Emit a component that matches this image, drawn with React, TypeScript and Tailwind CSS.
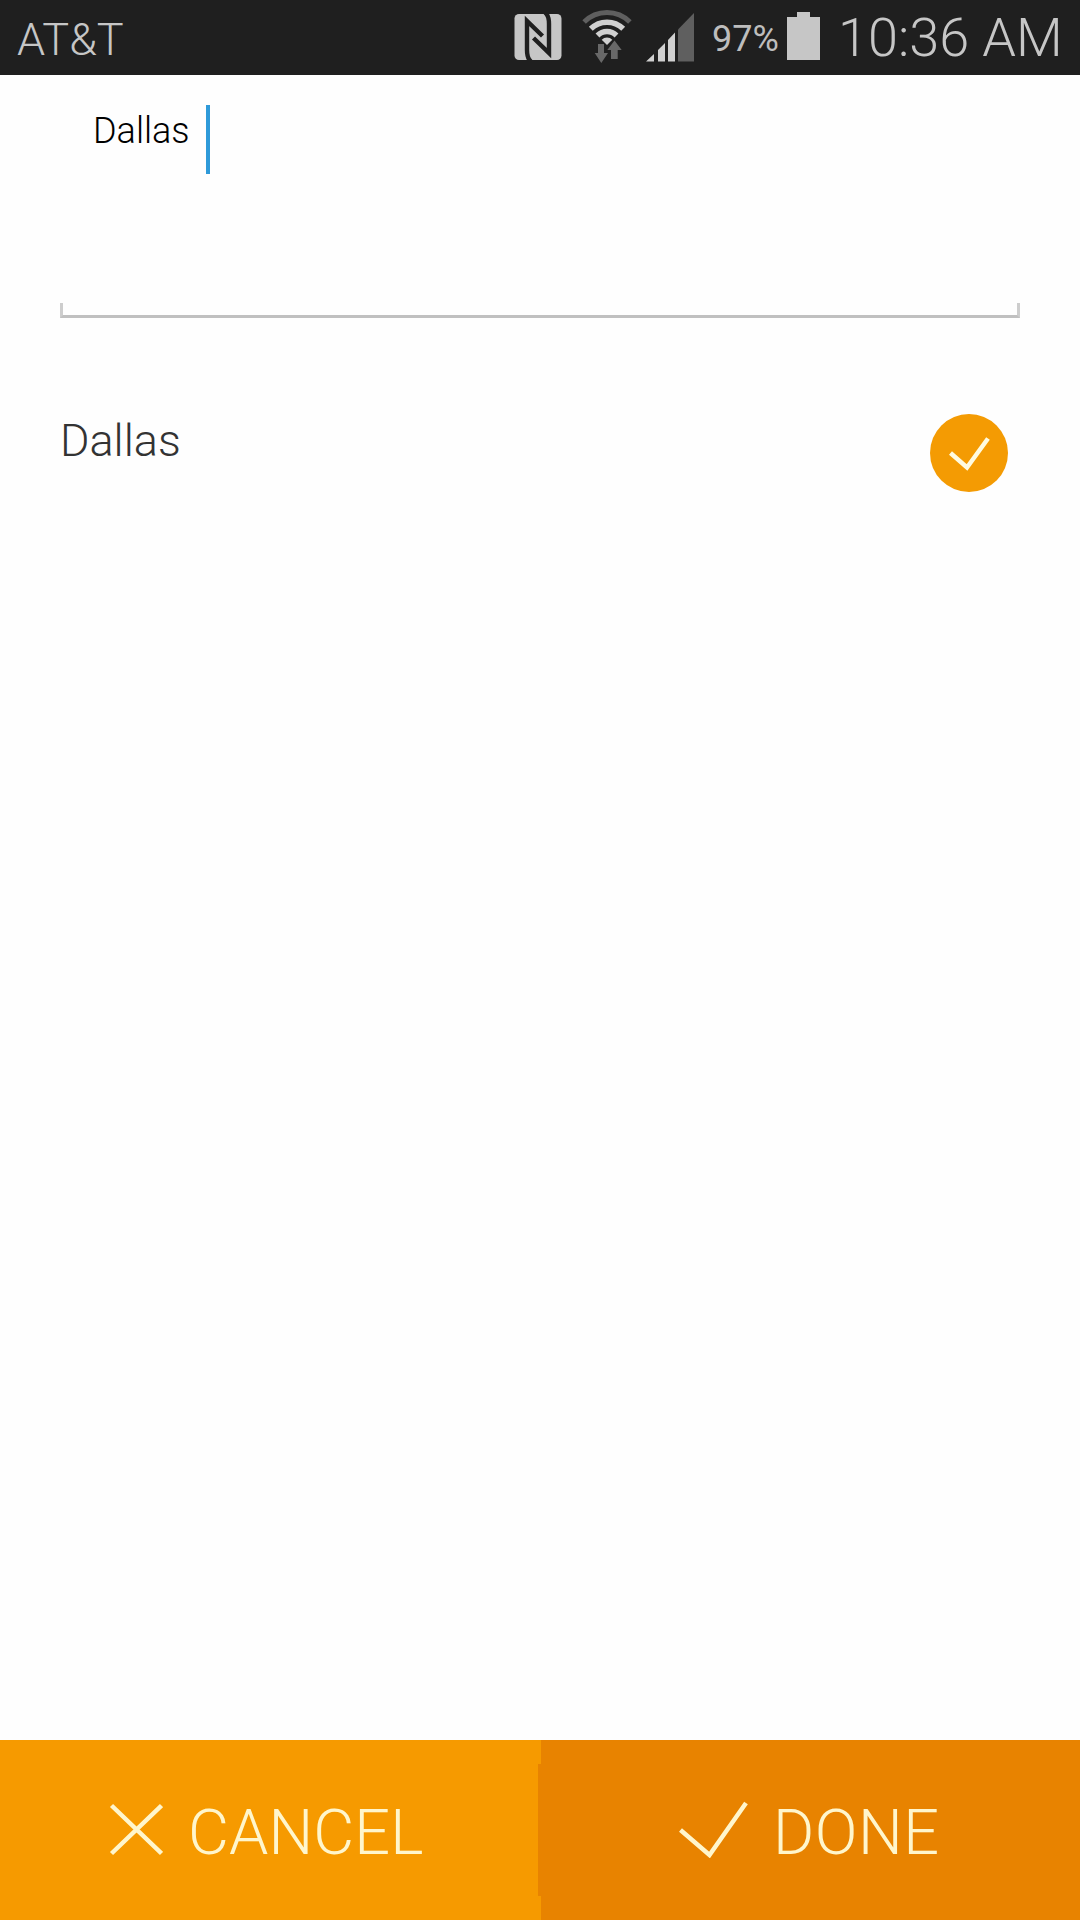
import { useState } from "react";

function NfcIcon() {
  return (
    <svg width="48" height="48" viewBox="0 0 48 48" className="shrink-0">
      <rect x="0.5" y="1" width="47" height="46" rx="4.5" fill="#c6c6c6" />
      <path d="M17 48.5C13.5 46 13 42 13 37V8L28.5 23" fill="none" stroke="#1f1f1f" strokeWidth="4.4" />
      <path d="M31 -0.5C34.5 2 35 6 35 11V40L19.5 25" fill="none" stroke="#1f1f1f" strokeWidth="4.4" />
    </svg>
  );
}

function WifiIcon() {
  return (
    <svg width="52" height="56" viewBox="0 0 52 56" className="shrink-0">
      <path d="M3.1 14.1A32.4 32.4 0 0 1 48.9 14.1" fill="none" stroke="#5f5f5f" strokeWidth="5" />
      <g fill="none" stroke="#d0d0d0" strokeWidth="5.5">
        <path d="M9.8 20.8A23 23 0 0 1 42.2 20.8" />
        <path d="M16.5 27.5A13.5 13.5 0 0 1 35.5 27.5" />
      </g>
      <path d="M20.7 31.7A7.5 7.5 0 0 1 31.3 31.7L26 37Z" fill="#d0d0d0" />
      <path d="M17 36h6v9h4L20.3 55 13.7 45H17ZM33.5 32.5L40.7 42h-4v9H30v-9h-3.7Z" fill="#686868" />
    </svg>
  );
}

function SignalIcon() {
  return (
    <svg width="49" height="49" viewBox="0 0 49 49" className="shrink-0">
      <path d="M0 48.5L8 41V48.5ZM12 48.5V37L19 30V48.5ZM22 48.5V27L29 19.5V48.5Z" fill="#d0d0d0" />
      <path d="M32 48.5V16.5L48 0V48.5Z" fill="#5f5f5f" />
    </svg>
  );
}

function BatteryIcon() {
  return (
    <svg width="33" height="48" viewBox="0 0 33 48" className="shrink-0">
      <path d="M10 0H23V5H33V48H0V5H10Z" fill="#c6c6c6" />
    </svg>
  );
}

function StatusBar() {
  return (
    <header className="flex h-[75px] items-start bg-[#1f1f1f] pl-[17px] leading-none text-[#c6c6c6]">
      <span className="mt-[17px] w-[497px] text-[45px] font-light">AT&amp;T</span>
      <div className="mt-[13px] w-[67px]"><NfcIcon /></div>
      <div className="mt-[8px] w-[65px]"><WifiIcon /></div>
      <div className="mt-[13px] w-[66px]"><SignalIcon /></div>
      <span className="mt-[21px] w-[75px] text-[36px] text-[#bdbdbd]">97%</span>
      <div className="mt-[12px] w-[51px]"><BatteryIcon /></div>
      <span className="mt-[11px] text-[54px] font-light whitespace-nowrap">10:36 AM</span>
    </header>
  );
}

function CityInput({ value }: { value: string }) {
  return (
    <div className="mx-[60px] mt-[30px] flex h-[213px] flex-col justify-between">
      <div className="flex items-start pl-[33px] text-[36px] leading-none font-light text-black">
        <span className="mt-[8px] w-[113px]">{value}</span>
        <span className="h-[69px] w-1 bg-[#2f9ad9]" />
      </div>
      <div className="h-[15px] border-x-[3px] border-b-[3px] border-[#c0c0c0] border-x-[#cdcdcd]" />
    </div>
  );
}

function CityRow({ name, selected, onClick }: { name: string; selected: boolean; onClick: () => void }) {
  return (
    <button type="button" onClick={onClick} className="mt-[96px] flex items-start justify-between pr-[72px] pl-[60px]">
      <span className="mt-[4px] text-[45px] leading-none font-light text-[#333]">{name}</span>
      {selected && (
        <svg width="78" height="78" viewBox="0 0 78 78">
          <circle cx="39" cy="39" r="39" fill="#f49b03" />
          <path d="M20.5 39L37 53.5L58 24.5" fill="none" stroke="#fffbe0" strokeWidth="4.5" />
        </svg>
      )}
    </button>
  );
}

function ActionBar() {
  return (
    <footer className="mt-auto flex h-[180px] bg-[#f69a00] text-[63px] leading-none font-light text-[#fff6cc]">
      <button type="button" className="flex w-[538px] items-start pl-[109px]">
        <svg width="54" height="54" viewBox="0 0 54 54" className="mt-[62px] shrink-0">
          <path d="M2.5 3.5L52.5 51.5M52.5 3.5L2.5 51.5" fill="none" stroke="currentColor" strokeWidth="4.5" />
        </svg>
        <span className="mt-[61px] ml-[25px] tracking-[0.1px]">CANCEL</span>
      </button>
      <button type="button" className="flex flex-1 items-start bg-[#e88300] pl-[140px] [clip-path:polygon(3px_0,100%_0,100%_100%,3px_100%,3px_156px,0_156px,0_24px,3px_24px)]">
        <svg width="70" height="58" viewBox="0 0 70 58" className="mt-[60px] shrink-0">
          <path d="M2.5 30L31.5 55L68 3" fill="none" stroke="currentColor" strokeWidth="4.5" />
        </svg>
        <span className="mt-[61px] ml-[25px] tracking-[0.5px]">DONE</span>
      </button>
    </footer>
  );
}

export default function App() {
  const [selected, setSelected] = useState(true);

  return (
    <div className="flex h-[1920px] w-[1080px] flex-col overflow-hidden bg-[#fefefe] font-['Roboto',sans-serif]">
      <StatusBar />
      <CityInput value="Dallas" />
      <CityRow name="Dallas" selected={selected} onClick={() => setSelected(!selected)} />
      <ActionBar />
    </div>
  );
}
